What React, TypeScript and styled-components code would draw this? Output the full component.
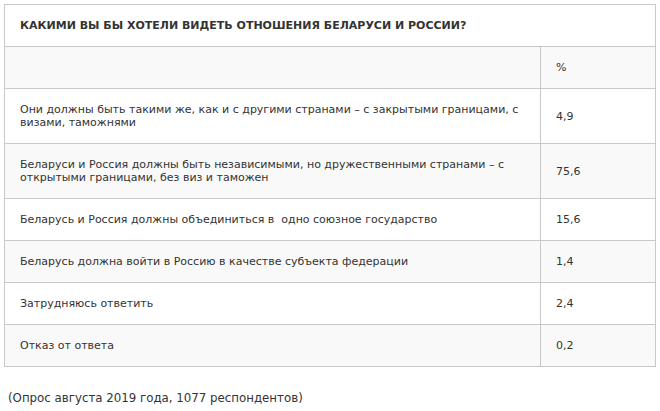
import React from "react";
import styled, { createGlobalStyle } from "styled-components";

const Global = createGlobalStyle`
  html, body { margin: 0; padding: 0; background: #fff; }
  body { font-family: "DejaVu Sans", Verdana, sans-serif; color: #333; }
`;

const Page = styled.div`
  padding: 4px 4px 0 4px;
`;

const Table = styled.table`
  width: 652px;
  border-collapse: collapse;
  font-size: 11px;
  line-height: 13px;
`;

const TitleCell = styled.th`
  border: 1px solid #c8c8c8;
  padding: 14px 15px;
  text-align: left;
  font-weight: bold;
  font-size: 11px;
  color: #333;
  background: #fff;
`;

const Row = styled.tr<{ $shade?: boolean }>`
  background: ${(p) => (p.$shade ? "#f9f9f9" : "#fff")};
`;

const Cell = styled.td<{ $num?: boolean }>`
  border: 1px solid #c8c8c8;
  padding: 14px 15px;
  vertical-align: middle;
  ${(p) => (p.$num ? "width: 84px;" : "")}
`;

const Note = styled.p`
  margin: 24px 0 0 4px;
  font-size: 11.8px;
  line-height: 14px;
  color: #333;
`;

const rows: [string, string][] = [
  ["Они должны быть такими же, как и с другими странами – с закрытыми границами, с визами, таможнями", "4,9"],
  ["Беларуси и Россия должны быть независимыми, но дружественными странами – с открытыми границами, без виз и таможен", "75,6"],
  ["Беларусь и Россия должны объединиться в \u00a0одно союзное государство", "15,6"],
  ["Беларусь должна войти в Россию в качестве субъекта федерации", "1,4"],
  ["Затрудняюсь ответить", "2,4"],
  ["Отказ от ответа", "0,2"],
];

export default function App() {
  return (
    <Page>
      <Global />
      <Table>
        <thead>
          <tr>
            <TitleCell colSpan={2}>КАКИМИ ВЫ БЫ ХОТЕЛИ ВИДЕТЬ ОТНОШЕНИЯ БЕЛАРУСИ И РОССИИ?</TitleCell>
          </tr>
        </thead>
        <tbody>
          <Row $shade>
            <Cell>&nbsp;</Cell>
            <Cell $num>%</Cell>
          </Row>
          {rows.map(([t, v], i) => (
            <Row key={i} $shade={i % 2 === 1}>
              <Cell>{t}</Cell>
              <Cell $num>{v}</Cell>
            </Row>
          ))}
        </tbody>
      </Table>
      <Note>(Опрос августа 2019 года, 1077 респондентов)</Note>
    </Page>
  );
}
